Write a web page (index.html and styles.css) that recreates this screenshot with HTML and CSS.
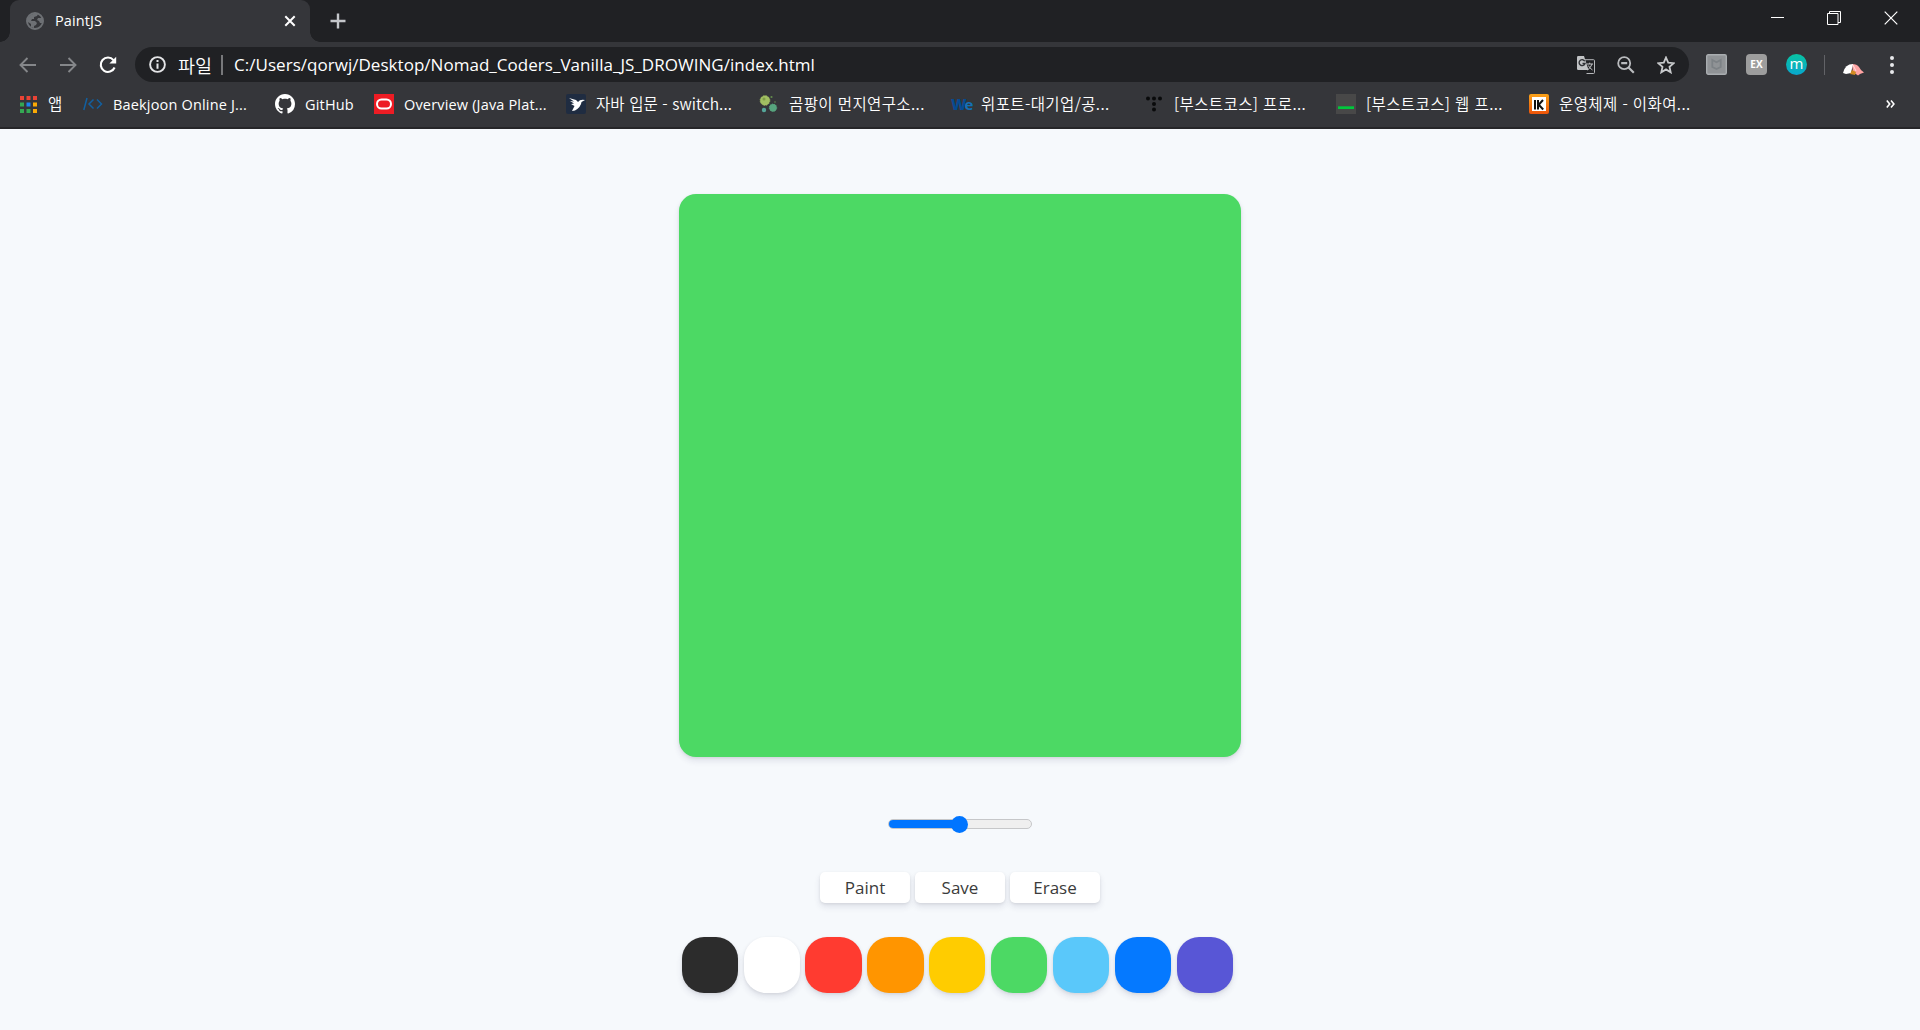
FILE: index.html
```html
<!DOCTYPE html>
<html lang="ko">
<head>
<meta charset="utf-8">
<title>PaintJS</title>
<link rel="stylesheet" href="styles.css">
</head>
<body>
<header class="browser">
  <div class="tabs">
    <div class="tab">
      <svg class="globe" width="18" height="18" viewBox="0 0 18 18"><circle cx="9" cy="9" r="8" fill="none" stroke="#6d7074" stroke-width="2"/><path d="M2 6C4 2 8 1 12 2L11 4L8 5V7H6L5 9H9L11 11L10 13L8 14V16L5 15V12L2 10ZM12 6L16 6V11L14 11L13 9L11 8Z" fill="#6d7074"/></svg>
      <span class="tab-title">PaintJS</span>
      <svg class="tab-close" width="12" height="12" viewBox="0 0 12 12"><path d="M1.3 1.3L10.7 10.7M10.7 1.3L1.3 10.7" stroke="#fff" stroke-width="2"/></svg>
    </div>
    <svg class="new-tab" width="16" height="16" viewBox="0 0 16 16"><path d="M8 .5V15.5M.5 8H15.5" stroke="#c4c6ca" stroke-width="2.4"/></svg>
    <div class="window-controls">
      <svg width="13" height="14" viewBox="0 0 13 14"><path d="M0 6.5H13" stroke="#fff"/></svg>
      <svg width="14" height="14" viewBox="0 0 14 14"><path d="M.5 2.5H11V13.5H.5ZM2.5 2.5V.5H13.5V11.5H11" fill="none" stroke="#fff"/></svg>
      <svg width="14" height="14" viewBox="0 0 14 14"><path d="M.7 .7L13.3 13.3M13.3 .7L.7 13.3" stroke="#fff" stroke-width="1.2"/></svg>
    </div>
  </div>
  <div class="toolbar">
    <svg class="back" width="18" height="16" viewBox="0 0 18 16"><path d="M17 8H2M8.5 1L1.5 8L8.5 15" fill="none" stroke="#85878a" stroke-width="1.9"/></svg>
    <svg class="forward" width="18" height="16" viewBox="0 0 18 16"><path d="M1 8H16M9.5 1L16.5 8L9.5 15" fill="none" stroke="#85878a" stroke-width="1.9"/></svg>
    <svg class="reload" width="18" height="18" viewBox="0 0 18 18"><path d="M15.6 11.5A7.2 7.2 0 1 1 14.5 4.1" fill="none" stroke="#fff" stroke-width="2.1"/><path d="M17.2 .8V7.6H10.4Z" fill="#fff"/></svg>
    <div class="address">
      <svg class="info" width="17" height="17" viewBox="0 0 17 17"><circle cx="8.5" cy="8.5" r="7.4" fill="none" stroke="#e4e5e7" stroke-width="1.9"/><path d="M8.5 4V5.9M8.5 7.4V12.8" stroke="#e4e5e7" stroke-width="2"/></svg>
      <span class="scheme">파일</span>
      <span class="url">C:/Users/qorwj/Desktop/Nomad_Coders_Vanilla_JS_DROWING/index.html</span>
      <div class="address-actions">
        <svg width="18" height="18" viewBox="0 0 18 18"><path d="M8 3.7H16.5Q17.5 3.7 17.5 4.7V16.5Q17.5 17.5 16.5 17.5H9.5" fill="none" stroke="#b5b7ba"/><path d="M1.2 0H7L11.5 14H1.2Q0 14 0 12.8V1.2Q0 0 1.2 0Z" fill="#c1c3c5"/><path d="M7.8 5.3A3 3 0 1 0 8 7.5H5.5" fill="none" stroke="#303236" stroke-width="1.4"/><path d="M9.5 8H16M12.7 6.7V8M15 8Q14 11.5 10.5 14M11.3 9.5Q12.5 12 15.5 14" fill="none" stroke="#c1c3c5"/></svg>
        <svg width="18" height="18" viewBox="0 0 18 18"><circle cx="7.2" cy="7.2" r="6" fill="none" stroke="#b9bbbe" stroke-width="1.8"/><path d="M4.2 7.2H10.2M11.3 11.3L16.8 16.8" stroke="#b9bbbe" stroke-width="2.2"/></svg>
        <svg width="18" height="18" viewBox="0 0 18 18"><path d="M9 1.5L11.2 6.7L16.7 7.2L12.5 10.9L13.7 16.3L9 13.4L4.3 16.3L5.5 10.9L1.3 7.2L6.8 6.7Z" fill="none" stroke="#c8cacc" stroke-width="1.8"/></svg>
      </div>
    </div>
    <div class="extensions">
      <svg width="21" height="21" viewBox="0 0 21 21"><rect x=".7" y=".7" width="19.6" height="19.6" rx="1.5" fill="#909396" stroke="#a9adb0" stroke-width="1.4"/><path d="M6.3 6V13L10.5 15L14.7 13V6L10.5 8.2Z" fill="none" stroke="#7d8286" stroke-width="1.8"/></svg>
      <span class="ex">EX</span>
      <span class="momentum">m</span>
      <i class="divider"></i>
      <svg class="avatar" width="21" height="12" viewBox="0 0 21 12"><path d="M9 0Q14 0 16 3Q18 7 21 8.5L17 10L15 11.5L10 8Z" fill="#ffa3a3"/><path d="M0 9Q2 0 10 0L8 9L3 10Z" fill="#fff"/><path d="M10 1L13 7" stroke="#ffe0e0"/><path d="M7 10L9 6L13 8L12 11Z" fill="#d28b20"/></svg>
      <svg class="menu" width="4" height="18" viewBox="0 0 4 18"><g fill="#e8e9eb"><circle cx="2" cy="2" r="2"/><circle cx="2" cy="9" r="2"/><circle cx="2" cy="16" r="2"/></g></svg>
    </div>
  </div>
  <nav class="bookmarks">
    <a class="bookmark apps">
      <svg width="17" height="17" viewBox="0 0 17 17"><path d="M0 0H4V4H0ZM6.5 0H10.5V4H6.5ZM13 0H17V4H13Z" fill="#ea4335"/><path d="M0 6.5H4V10.5H0ZM0 13H4V17H0ZM6.5 13H10.5V17H6.5Z" fill="#34a853"/><path d="M6.5 6.5H10.5V10.5H6.5Z" fill="#1a83f0"/><path d="M13 6.5H17V10.5H13ZM13 13H17V17H13Z" fill="#fbaa05"/></svg>
      <span class="ko">앱</span>
    </a>
    <a class="bookmark baekjoon">
      <svg width="20" height="20" viewBox="0 0 20 20"><path d="M4 4L.8 16M10.5 5.5L6 10L10.5 14.5M14 5.5L18.5 10L14 14.5" fill="none" stroke="#1260a0" stroke-width="1.5"/></svg>
      <span>Baekjoon Online J...</span>
    </a>
    <a class="bookmark github">
      <svg width="20" height="20" viewBox="0 0 16 16"><path fill="#fff" d="M8 0C3.580 0 0 3.580 0 8c0 3.540 2.290 6.530 5.470 7.590.4.070.55-.17.55-.38 0-.19-.01-.82-.01-1.490-2.010.37-2.530-.49-2.690-.94-.09-.23-.48-.94-.82-1.130-.28-.15-.68-.52-.01-.53.63-.01 1.080.58 1.230.82.720 1.210 1.870.87 2.330.66.070-.52.280-.87.510-1.070-1.780-.2-3.640-.89-3.640-3.950 0-.87.310-1.590.82-2.150-.08-.2-.36-1.020.08-2.120 0 0 .67-.21 2.200.82.640-.18 1.320-.27 2-.27s1.360.09 2 .27c1.530-1.040 2.200-.82 2.200-.82.440 1.100.16 1.920.08 2.120.51.560.82 1.270.82 2.150 0 3.070-1.870 3.750-3.650 3.950.29.25.54.73.54 1.480 0 1.070-.01 1.930-.01 2.200 0 .21.150.46.550.38A8 8 0 0 0 16 8c0-4.420-3.580-8-8-8z"/></svg>
      <span>GitHub</span>
    </a>
    <a class="bookmark oracle">
      <svg width="20" height="20" viewBox="0 0 20 20"><path d="M0 0H20V20H0Z" fill="#ed1c24"/><rect x="3" y="5.5" width="14" height="9" rx="4.5" fill="none" stroke="#fff" stroke-width="2"/></svg>
      <span>Overview (Java Plat...</span>
    </a>
    <a class="bookmark java">
      <svg width="20" height="20" viewBox="0 0 20 20"><rect width="20" height="20" rx="2" fill="#1f2c41"/><path d="M3 4L10 6L12 8Q14 5 19 6L15.5 8Q15 13 9 16.5L6 17L8.5 12L5 10L8 9.5L4 7L8 7.5Z" fill="#fff"/></svg>
      <span class="ko mixed">자바 입문 - switch...</span>
    </a>
    <a class="bookmark mold">
      <svg width="20" height="20" viewBox="0 0 20 20"><circle cx="6" cy="6.5" r="4.8" fill="#a1bf62" stroke="#a1bf62" stroke-dasharray="1.5 1"/><circle cx="14" cy="13.8" r="3.7" fill="#57a47e" stroke="#57a47e" stroke-dasharray="1 1"/><circle cx="5" cy="16" r="2.2" fill="#55a69a"/><circle cx="12.5" cy="3" r="1.1" fill="#638b4c"/><circle cx="16" cy="8" r=".8" fill="#638b4c"/><circle cx="5" cy="5" r="1.5" fill="#7e9d46"/></svg>
      <span class="ko">곰팡이 먼지연구소...</span>
    </a>
    <a class="bookmark weport">
      <span class="we"><b>W</b>e</span>
      <span class="ko">위포트-대기업/공...</span>
    </a>
    <a class="bookmark boost">
      <svg width="20" height="20" viewBox="0 0 20 20"><g fill="#090a0b"><circle cx="4" cy="4.5" r="2"/><circle cx="10" cy="4.5" r="2"/><circle cx="16" cy="4.5" r="2"/><circle cx="10" cy="10" r="2"/><circle cx="10" cy="15.5" r="2"/></g></svg>
      <span class="ko">[부스트코스] 프로...</span>
    </a>
    <a class="bookmark web">
      <svg width="20" height="20" viewBox="0 0 20 20"><path d="M0 0H20V20H0Z" fill="#484848"/><path d="M2 12.3H18V15H2Z" fill="#00c73c"/></svg>
      <span class="ko">[부스트코스] 웹 프...</span>
    </a>
    <a class="bookmark os">
      <svg width="20" height="20" viewBox="0 0 20 20"><defs><linearGradient id="flame" x2="0" y2="1"><stop stop-color="#faa31a"/><stop offset="1" stop-color="#ed5409"/></linearGradient></defs><rect width="20" height="20" rx="2" fill="url(#flame)"/><path d="M3 3H17V17H3Z" fill="#fff"/><path d="M6 6V15.5M9 6V15.5M14 6L9.7 10.7L14.2 15.5" fill="none" stroke="#111" stroke-width="2"/></svg>
      <span class="ko">운영체제 - 이화여...</span>
    </a>
    <svg class="more" width="9" height="8" viewBox="0 0 9 8"><path d="M.8 .5L3.7 4L.8 7.5M5 .5L7.9 4L5 7.5" fill="none" stroke="#fff" stroke-width="1.6"/></svg>
  </nav>
</header>
<main class="app">
  <div class="canvas"></div>
  <div class="range"><div class="range-track"><div class="range-fill"></div></div><i class="range-thumb"></i></div>
  <div class="actions"><button>Paint</button><button>Save</button><button>Erase</button></div>
  <div class="colors">
    <i class="color black"></i><i class="color white"></i><i class="color red"></i><i class="color orange"></i><i class="color yellow"></i><i class="color green"></i><i class="color sky"></i><i class="color blue"></i><i class="color purple"></i>
  </div>
</main>
</body>
</html>
```
FILE: styles.css
```css
* { box-sizing: border-box; }
body { margin: 0; height: 1030px; overflow: hidden; display: flex; flex-direction: column; background: #f6f9fc; font-family: "Open Sans", "Noto Sans CJK KR", sans-serif; }
svg { display: block; flex: none; }
.browser { height: 129px; flex: none; background: #35363a; border-bottom: 2px solid #262629; color: #fff; }
.tabs { height: 42px; background: #202124; display: flex; align-items: flex-start; padding-left: 10px; }
.tab { position: relative; width: 300px; height: 42px; background: #35363a; border-radius: 9px 9px 0 0; display: flex; align-items: center; padding: 0 14px 0 16px; }
.tab::before, .tab::after { content: ""; position: absolute; bottom: 0; width: 10px; height: 10px; }
.tab::before { left: -10px; background: radial-gradient(circle at 0 0, transparent 9.5px, #35363a 10px); }
.tab::after { right: -10px; background: radial-gradient(circle at 100% 0, transparent 9.5px, #35363a 10px); }
.tab-title { margin-left: 11px; font-size: 14.5px; line-height: 20px; letter-spacing: 0.1px; }
.tab-close { margin-left: auto; }
.new-tab { margin: 13px 0 0 19.5px; }
.window-controls { margin: 11px 22px 0 auto; display: flex; gap: 43px; }
.toolbar { height: 44px; display: flex; align-items: center; padding: 1px 0 0 19px; }
.forward { margin-left: 22px; }
.reload { margin-left: 22px; }
.address { width: 1554px; height: 35px; margin-left: 18px; border-radius: 18px; background: #202124; display: flex; align-items: center; padding: 0 14px; }
.scheme { margin-left: 12px; padding-right: 9px; line-height: 20px; border-right: 2px solid #77787b; font-family: "Noto Sans CJK KR", sans-serif; font-size: 18.5px; font-weight: 350; }
.url { margin-left: 11px; font-size: 17px; line-height: 24px; white-space: nowrap; letter-spacing: 0.03px; }
.address-actions { margin-left: auto; display: flex; gap: 22px; }
.extensions { display: flex; align-items: center; margin-left: 17px; }
.ex { width: 21px; height: 21px; margin-left: 19px; border-radius: 4px; background: #9d9d9d; font: 700 10px/21px "Open Sans", sans-serif; text-align: center; }
.momentum { width: 21px; height: 21px; margin-left: 19px; border-radius: 50%; background: linear-gradient(#09c3a2, #08a7ce); font: 500 15px/18px "Open Sans", sans-serif; text-align: center; }
.divider { width: 1px; height: 20px; margin-left: 17px; background: #626367; }
.avatar { margin: 10px 0 0 18px; }
.menu { margin-left: 26px; }
.bookmarks { height: 36px; display: flex; align-items: center; }
.bookmark { display: flex; align-items: center; gap: 10px; height: 34px; flex: none; white-space: nowrap; font-size: 14.5px; letter-spacing: 0.17px; }
.bookmark .ko { font-family: "Noto Sans CJK KR", sans-serif; font-size: 15.5px; font-weight: 350; letter-spacing: 0.4px; line-height: 20px; margin-top: -2px; }
.bookmark .mixed { letter-spacing: 0.1px; }
.apps { width: 63px; margin-left: 20px; gap: 11px; }
.baekjoon { width: 192px; }
.github { width: 99px; }
.oracle { width: 192px; }
.java { width: 193px; }
.mold { width: 192px; }
.weport { width: 193px; }
.boost { width: 192px; }
.web { width: 193px; }
.we { width: 20px; font: 700 15px/20px "Open Sans", sans-serif; letter-spacing: -2px; color: #1371b8; }
.we b { color: #064b91; }
.more { margin: 0 25px 0 auto; }
.app { display: flex; flex-direction: column; align-items: center; padding-top: 65px; }
.canvas, .actions button, .color { box-shadow: 0 4px 6px rgba(50, 50, 93, .11), 0 1px 3px rgba(0, 0, 0, .08); }
.canvas { width: 562px; height: 563px; border-radius: 17px; background: #4cd964; }
.range { position: relative; width: 144px; height: 18px; margin-top: 58px; display: flex; align-items: center; }
.range-track { width: 144px; height: 10px; border: 1px solid #c6c7c9; border-radius: 5px; background: #efefef; overflow: hidden; }
.range-fill { width: 70px; height: 10px; margin: -1px; background: #0075ff; }
.range-thumb { position: absolute; left: 62.5px; top: .5px; width: 17px; height: 17px; border-radius: 50%; background: #0075ff; }
.actions { display: flex; gap: 5px; margin-top: 39px; }
.actions button { width: 90px; height: 31px; border: 0; padding: 0; border-radius: 5px; background: #fff; color: #3b3b3b; font: 17px/31px "Open Sans", sans-serif; }
.colors { display: flex; gap: 5.625px; margin: 34px 5.4px 0 0; }
.color { width: 56.25px; height: 56.25px; border-radius: 22px; }
.black { background: #2c2c2c; }
.white { background: #fff; }
.red { background: #ff3b30; }
.orange { background: #ff9500; }
.yellow { background: #fc0; }
.green { background: #4cd964; }
.sky { background: #5ac8fa; }
.blue { background: #0579ff; }
.purple { background: #5856d6; }
```
